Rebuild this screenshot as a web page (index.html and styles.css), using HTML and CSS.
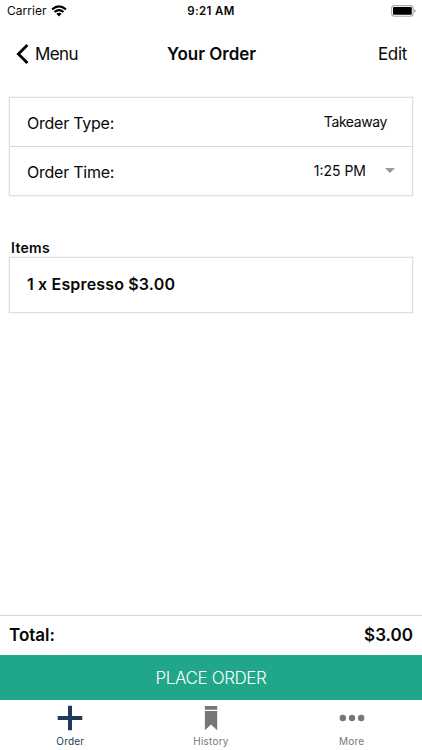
FILE: index.html
```html
<!DOCTYPE html>
<html lang="en">
<head>
<meta charset="utf-8">
<title>Your Order</title>
<link rel="stylesheet" href="styles.css">
</head>
<body>
<div class="screen">
  <header class="status">
    <div class="carrier"><span>Carrier</span>
      <svg class="wifi" width="16" height="12" viewBox="0 0 16 12" fill="none" stroke="#000" stroke-width="2.1"><path d="M1.1 4.4Q8-1.6 14.9 4.4M3.5 7Q8 3.1 12.5 7"/><path d="M5.4 8.7Q8 6.7 10.6 8.7L8 11.4Z" fill="#000" stroke="none"/></svg>
    </div>
    <span class="clock">9:21 AM</span>
    <svg class="battery" width="25" height="12" viewBox="0 0 25 12"><rect x=".6" y=".6" width="21.6" height="10.6" rx="3" fill="#fff" stroke="#aaa" stroke-width="1.1"/><rect x="2" y="2" width="18.8" height="7.8" rx="1.2"/><path d="M23.3 4.2Q24.6 4.8 24.6 5.9T23.3 7.6Z" fill="#888"/></svg>
  </header>
  <nav class="navbar">
    <a class="back"><svg width="13" height="20" viewBox="0 0 13 20" fill="none" stroke="#000" stroke-width="2.8"><path d="M11.4 1L2.4 10L11.4 19"/></svg><span>Menu</span></a>
    <h1 class="title">Your Order</h1>
    <a class="edit">Edit</a>
  </nav>
  <main class="content">
    <section class="card">
      <div class="row"><span class="label">Order Type:</span><span class="value takeaway">Takeaway</span></div>
      <div class="row"><span class="label">Order Time:</span><span class="value time">1:25 PM</span><svg class="caret" width="10" height="5" viewBox="0 0 10 5"><path d="M0 0H10L5 5Z" fill="#999"/></svg></div>
    </section>
    <h2 class="heading">Items</h2>
    <section class="card item"><span>1 x Espresso $3.00</span></section>
  </main>
  <div class="total"><span class="total-label">Total:</span><span class="total-price">$3.00</span></div>
  <button class="place"><span>PLACE ORDER</span></button>
  <footer class="tabs">
    <a class="tab active"><svg width="26" height="26" viewBox="0 0 26 26"><path d="M13 .7V25.3M.7 13H25.3" stroke="#213a59" stroke-width="4"/></svg><span>Order</span></a>
    <a class="tab"><svg width="26" height="26" viewBox="0 0 26 26" fill="#777"><path d="M6.9 1H19.2V4.7H6.9ZM6.9 6H19.2V25.3L13 19.6L6.9 25.3Z"/></svg><span>History</span></a>
    <a class="tab"><svg width="26" height="26" viewBox="0 0 26 26" fill="#777"><circle cx="3.8" cy="13" r="3.2"/><circle cx="13" cy="13" r="3.2"/><circle cx="22.2" cy="13" r="3.2"/></svg><span>More</span></a>
  </footer>
</div>
</body>
</html>
```
FILE: styles.css
```css
* { box-sizing: border-box; }
body { margin: 0; background: #fff; color: #080808; font-family: Inter, "Liberation Sans", sans-serif; }
svg { display: block; flex: none; }
.screen { width: 422px; height: 750px; display: flex; flex-direction: column; overflow: hidden; white-space: nowrap; }
.status { height: 22px; display: grid; grid-template-columns: 1fr auto 1fr; align-items: center; padding: 0 6px 0 7px; }
.carrier { display: flex; align-items: center; gap: 4px; font-size: 12px; letter-spacing: .05px; }
.wifi { margin-bottom: 1px; }
.carrier span { padding-bottom: 1px; }
.clock { padding: 0 1px 1px 0; font-size: 11.5px; font-weight: 600; letter-spacing: .4px; }
.battery { justify-self: end; margin-bottom: 1px; }
.navbar { height: 65px; display: grid; grid-template-columns: 1fr auto 1fr; align-items: center; padding: 0 15px 1px 16px; font-size: 17px; }
.back { display: flex; align-items: center; gap: 6px; letter-spacing: -.6px; }
.title { margin: 0; font-size: 17px; font-weight: 600; }
.edit { justify-self: end; letter-spacing: -.3px; }
.content { flex: 1; padding: 10px 9px 0; }
.card { border: 1px solid #dedede; box-shadow: 0 0 0 .5px #eee; }
.row { height: 48px; display: flex; align-items: center; padding-left: 17px; }
.row + .row { height: 49px; border-top: 1px solid #d8d8d8; }
.label { flex: 1; font-size: 16px; letter-spacing: -.24px; padding-top: 2px; }
.row + .row .label { padding-top: 1px; }
.value { font-size: 14px; padding-bottom: 1px; }
.takeaway { margin-right: 25px; letter-spacing: -.4px; }
.time { margin-right: 19px; }
.caret { margin-right: 17px; margin-bottom: 1px; }
.heading { margin: 43px 0 0 2px; height: 18px; font-size: 14px; line-height: 18px; font-weight: 600; letter-spacing: .3px; }
.item { height: 56px; display: flex; align-items: center; padding: 0 17px 3px; font-size: 16px; font-weight: 600; letter-spacing: .16px; }
.total { height: 40px; border-top: 1px solid #d8d8d8; display: flex; justify-content: space-between; align-items: center; padding: 0 9px 1px; font-size: 17px; font-weight: 600; }
.place { height: 45px; border: 0; padding: 0; background: #20a689; color: #fff; font: 300 17px Inter, "Liberation Sans", sans-serif; letter-spacing: -.4px; }
.tabs { height: 50px; display: grid; grid-template-columns: repeat(3, 1fr); }
.tab { display: flex; flex-direction: column; align-items: center; padding-top: 5px; color: #777; font-size: 10px; line-height: 12px; gap: 4px; letter-spacing: .2px; }
.active { color: #213a59; }
```
